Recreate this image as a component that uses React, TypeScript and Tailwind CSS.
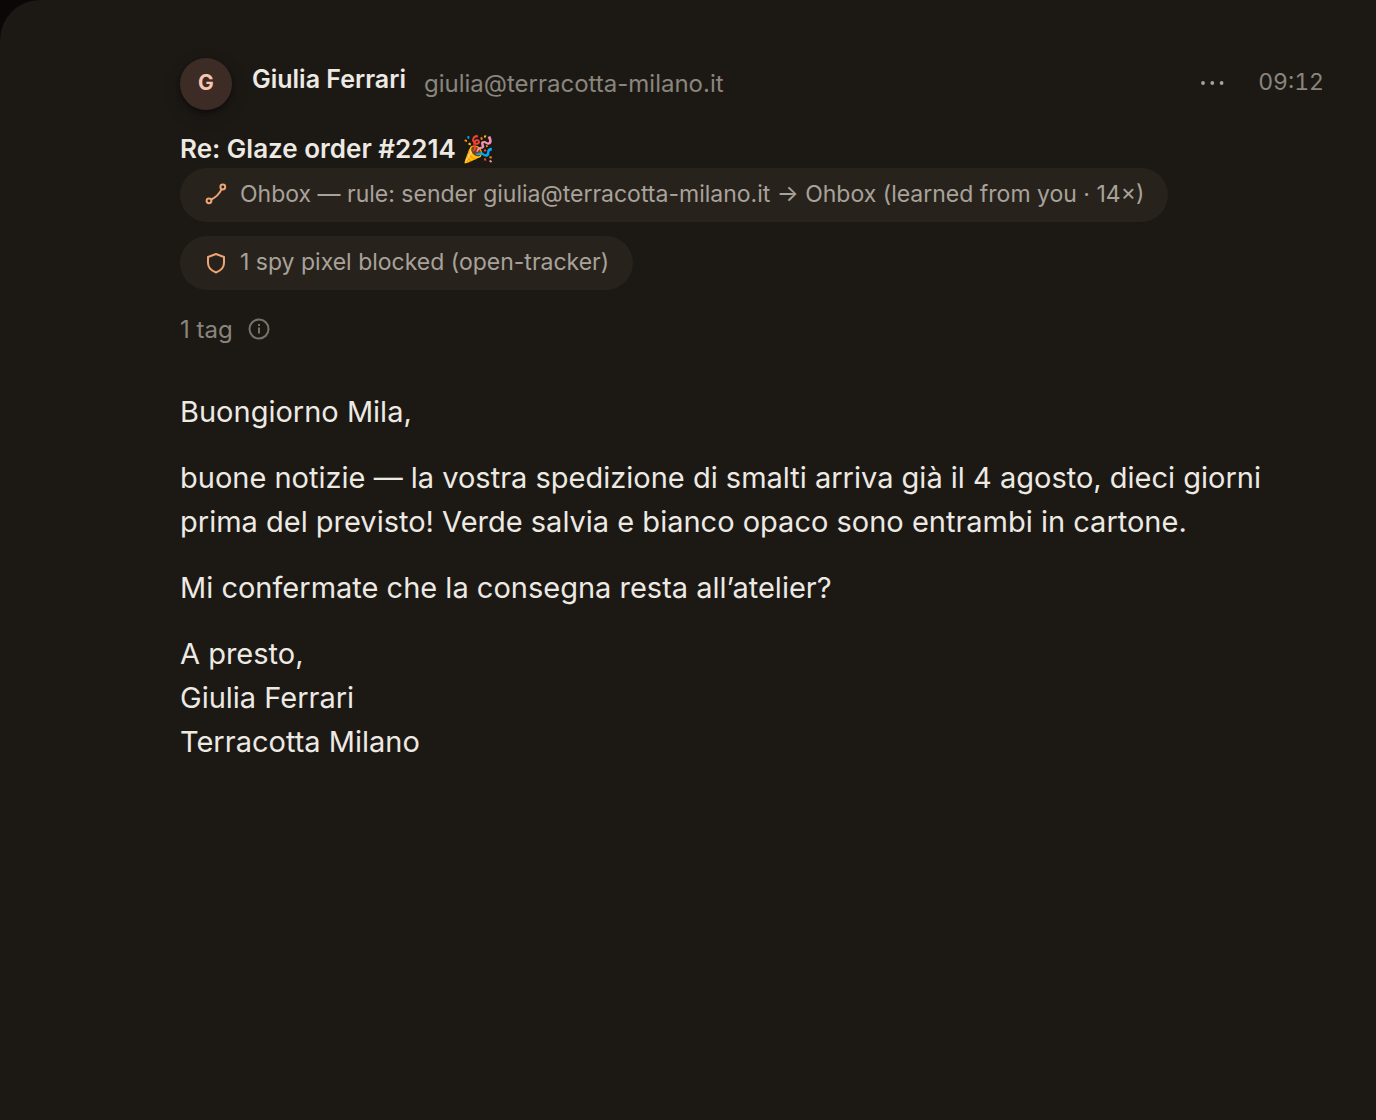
import React from "react";

const chip =
  "flex w-fit items-center gap-3 rounded-full bg-[#28221d] h-[54px] px-6 pb-0.5 text-[23px] leading-8 text-[#a8a29a]";

function RouteIcon() {
  return (
    <svg className="size-6 shrink-0 text-[#eda574]" viewBox="0 0 24 24" fill="none" stroke="currentColor" strokeWidth="2" strokeLinecap="round" aria-hidden="true">
      <circle cx="5" cy="18.8" r="2.4" />
      <circle cx="18.8" cy="5" r="2.4" />
      <path d="M7.3 17.5C11.500 15.500 15.500 11.500 17.500 7.400" />
    </svg>
  );
}

function ShieldIcon() {
  return (
    <svg className="size-6 shrink-0 text-[#eda574]" viewBox="0 0 24 24" fill="none" stroke="currentColor" strokeWidth="2" strokeLinejoin="round" aria-hidden="true">
      <path d="M12 4L20 7V13C20 17.500 17 20.500 12 22.500C7 20.500 4 17.500 4 13V7Z" />
    </svg>
  );
}

export default function App() {
  return (
    <div className="min-h-screen bg-[#090806] font-['Inter',sans-serif]">
      <main className="min-h-screen rounded-tl-[40px] bg-[#1c1915] pt-[58px] pr-[52px] pl-[180px] text-[#ede9e3]">
        <header className="flex h-[52px] items-center">
          <div className="flex size-[52px] items-center justify-center rounded-full bg-[#3d2c26] pb-0.5 text-[21px] font-bold text-[#f8c5b0] shadow-[0_2px_4px_rgba(0,0,0,0.4),0_6px_16px_rgba(0,0,0,0.25)]">G</div>
          <div className="ml-5 flex items-center gap-[18px]">
            <h1 className="pb-[10px] text-[25px] leading-8 font-semibold">Giulia Ferrari</h1>
            <span className="text-2xl text-[#8a857d]">giulia@terracotta-milano.it</span>
          </div>
          <div className="ml-auto flex items-center gap-8 pb-1">
            <button type="button" aria-label="More actions" className="text-[#a8a29a]">
              <svg className="size-7" viewBox="0 0 28 28" fill="currentColor" aria-hidden="true">
                <circle cx="5" cy="15" r="1.9" />
                <circle cx="14.300" cy="15" r="1.9" />
                <circle cx="23.600" cy="15" r="1.9" />
              </svg>
            </button>
            <time className="text-[23px] leading-8 text-[#8a857d] tabular-nums">09:12</time>
          </div>
        </header>
        <h2 className="mt-5 text-[26px] leading-[38px] font-semibold">Re: Glaze order #2214 🎉</h2>
        <div className="flex flex-col gap-[14px]">
          <div className={chip}>
            <RouteIcon />
            <span>Ohbox — rule: sender giulia@terracotta-milano.it → Ohbox (learned from you · 14×)</span>
          </div>
          <div className={chip}>
            <ShieldIcon />
            <span>1 spy pixel blocked (open-tracker)</span>
          </div>
        </div>
        <div className="mt-6 flex items-center gap-[15px] text-2xl text-[#8a857d]">
          <span>1 tag</span>
          <button type="button" aria-label="Tag details" className="pb-0.5 text-[#77726a]">
            <svg className="size-[22px]" viewBox="0 0 22 22" fill="none" stroke="currentColor" strokeWidth="2" aria-hidden="true">
              <circle cx="11" cy="11" r="9.5" />
              <path d="M11 9.5v6M11 6v2" />
            </svg>
          </button>
        </div>
        <article className="mt-11 flex flex-col gap-[22px] text-[29px] leading-[44px]">
          <p>Buongiorno Mila,</p>
          <p>buone notizie — la vostra spedizione di smalti arriva già il 4 agosto, dieci giorni prima del previsto! Verde salvia e bianco opaco sono entrambi in cartone.</p>
          <p>Mi confermate che la consegna resta all’atelier?</p>
          <p>A presto,<br />Giulia Ferrari<br />Terracotta Milano</p>
        </article>
      </main>
    </div>
  );
}
